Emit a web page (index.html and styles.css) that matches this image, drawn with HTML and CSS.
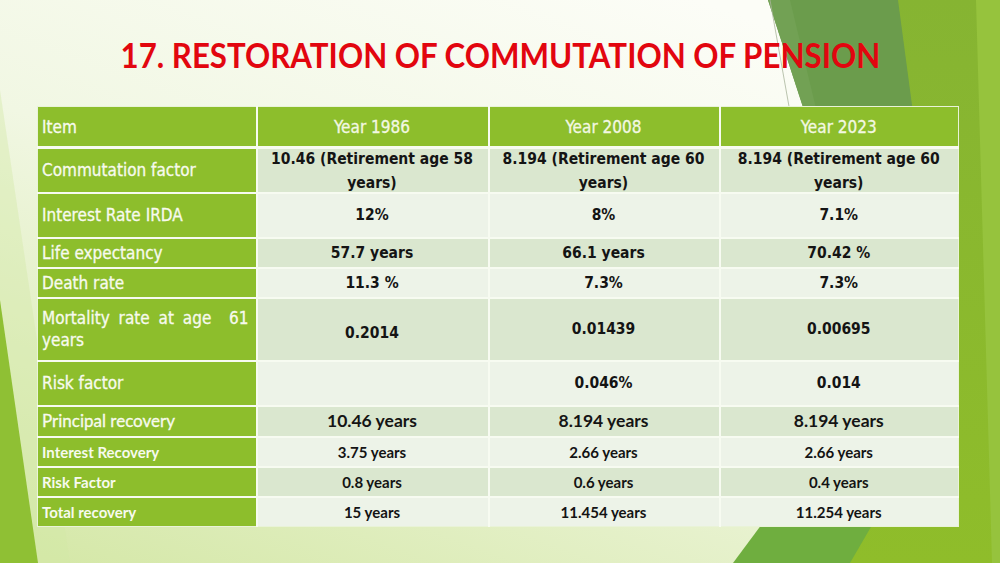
FILE: index.html
```html
<!DOCTYPE html>
<html lang="en">
<head>
<meta charset="utf-8">
<title>Restoration of Commutation of Pension</title>
<link rel="stylesheet" href="styles.css">
</head>
<body>
<div class="slide">
  <svg class="bg" viewBox="0 0 1000 563" preserveAspectRatio="none" aria-hidden="true">
    <defs>
      <linearGradient id="bgGrad" x1="0.7" y1="0" x2="0.05" y2="1">
        <stop offset="0" stop-color="#fcfdf7"/>
        <stop offset="0.45" stop-color="#f1f7e3"/>
        <stop offset="1" stop-color="#d5e8a8"/>
      </linearGradient>
      <linearGradient id="limeGrad" x1="0" y1="0" x2="0" y2="1">
        <stop offset="0" stop-color="#86b432"/>
        <stop offset="1" stop-color="#8fbd2a"/>
      </linearGradient>
    </defs>
    <rect width="1000" height="563" fill="url(#bgGrad)"/>
    <polygon points="0,90 0,563 70,563" fill="#d3e8a4" opacity="0.4"/>
    <polygon points="0,300 0,563 38,563" fill="#8fc034"/>
    <polygon points="880,0 1000,0 1000,563 850,563" fill="url(#limeGrad)"/>
    <polygon points="976,0 1000,0 1000,563 992,563" fill="#96c33d"/>
    <polygon points="768,0 898,0 918,150 817,150" fill="#6b9c4c"/>
    <polygon points="768,0 790,0 826,150 817,150" fill="#72a154"/>
    <line x1="770" y1="0" x2="790" y2="112" stroke="#a9b59c" stroke-width="0.8"/>
    <polygon points="765,520 875,520 850,563 733,563" fill="#6fae3f"/>
  </svg>

  <h1 class="title"><span class="title-text">17. RESTORATION OF COMMUTATION OF PENSION</span></h1>

  <table class="grid">
    <colgroup>
      <col class="c1"><col class="c2"><col class="c3"><col class="c4">
    </colgroup>
    <thead>
      <tr class="r-head">
        <th class="lab">Item</th>
        <th>Year 1986</th>
        <th>Year 2008</th>
        <th>Year 2023</th>
      </tr>
    </thead>
    <tbody>
      <tr class="r45 odd">
        <td class="lab">Commutation factor</td>
        <td><span class="wrap">10.46 (Retirement age 58 years)</span></td>
        <td><span class="wrap">8.194 (Retirement age 60 years)</span></td>
        <td><span class="wrap">8.194 (Retirement age 60 years)</span></td>
      </tr>
      <tr class="r45 even">
        <td class="lab">Interest Rate IRDA</td>
        <td>12%</td>
        <td>8%</td>
        <td>7.1%</td>
      </tr>
      <tr class="r30 odd">
        <td class="lab">Life expectancy</td>
        <td>57.7 years</td>
        <td>66.1 years</td>
        <td>70.42 %</td>
      </tr>
      <tr class="r30 even">
        <td class="lab">Death rate</td>
        <td>11.3 %</td>
        <td>7.3%</td>
        <td>7.3%</td>
      </tr>
      <tr class="r63 odd">
        <td class="lab just">Mortality rate at age&nbsp; 61 years</td>
        <td class="low">0.2014</td>
        <td>0.01439</td>
        <td>0.00695</td>
      </tr>
      <tr class="r45 even">
        <td class="lab">Risk factor</td>
        <td></td>
        <td>0.046%</td>
        <td>0.014</td>
      </tr>
      <tr class="r31 odd big">
        <td class="lab">Principal recovery</td>
        <td>10.46 years</td>
        <td>8.194 years</td>
        <td>8.194 years</td>
      </tr>
      <tr class="r30 even small">
        <td class="lab">Interest Recovery</td>
        <td>3.75 years</td>
        <td>2.66 years</td>
        <td>2.66 years</td>
      </tr>
      <tr class="r30 odd small">
        <td class="lab">Risk Factor</td>
        <td>0.8 years</td>
        <td>0.6 years</td>
        <td>0.4 years</td>
      </tr>
      <tr class="r30 even small">
        <td class="lab">Total recovery</td>
        <td>15 years</td>
        <td>11.454 years</td>
        <td>11.254 years</td>
      </tr>
    </tbody>
  </table>
</div>
</body>
</html>
```

FILE: styles.css
```css
body {
  margin: 0;
  background: #ffffff;
}

.slide {
  position: relative;
  width: 1000px;
  height: 563px;
  overflow: hidden;
  background: #f2f7e4;
}

.bg {
  position: absolute;
  left: 0;
  top: 0;
  width: 1000px;
  height: 563px;
}

.title {
  position: relative;
  margin: 0;
  padding-top: 34px;
  height: 40px;
  line-height: 40px;
  font-family: Lato, "Liberation Sans", sans-serif;
  font-weight: bold;
  font-size: 35px;
  color: #e2060f;
  text-align: center;
}

.title-text {
  display: inline-block;
  transform: scaleX(0.893);
  transform-origin: 50% 50%;
  white-space: nowrap;
}

.grid {
  position: relative;
  margin: 32px 0 0 37px;
  width: 921px;
  border-collapse: collapse;
  table-layout: fixed;
}

.c1 { width: 219px; }
.c2 { width: 232px; }
.c3 { width: 231px; }
.c4 { width: 239px; }

.grid th,
.grid td {
  border: 2px solid #f7fbf1;
  padding: 0 5px 0 4px;
  vertical-align: middle;
  text-align: center;
}

.grid tr > :first-child { border-left: 1px solid #e9f3d8; }
.grid tr > :last-child { border-right: 1px solid #e9f3d8; }
.grid thead th { border-top: 1px solid #e9f3d8; border-bottom-width: 3px; }
.grid tbody tr:last-child td { border-bottom: 1px solid #e9f3d8; }

.r-head { height: 41px; }
.r45 { height: 45px; }
.r30 { height: 30px; }
.r31 { height: 31px; }
.r63 { height: 63px; }

.grid th {
  background: #8dbe2c;
  color: #f3f8e2;
  font-family: "DejaVu Sans Condensed", "DejaVu Sans", sans-serif;
  font-stretch: condensed;
  font-weight: normal;
  font-size: 17px;
  line-height: 22px;
  -webkit-text-stroke: 0.3px currentColor;
}

.grid td {
  font-family: "DejaVu Sans Condensed", "DejaVu Sans", sans-serif;
  font-stretch: condensed;
  font-weight: bold;
  font-size: 15.5px;
  line-height: 22px;
  color: #141414;
}

.wrap {
  display: block;
  margin: -2px 0 -4px;
  line-height: 24px;
}

.grid tr.odd td { background: #dae7cf; }
.grid tr.even td { background: #edf3e8; }

.grid .lab,
.grid tr.odd td.lab,
.grid tr.even td.lab {
  background: #8dbe2c;
  color: #f7faee;
  text-align: left;
  font-weight: normal;
  font-size: 17px;
  line-height: 22px;
  -webkit-text-stroke: 0.3px currentColor;
}

.grid tr td.lab.just {
  text-align: justify;
  padding-right: 7px;
}

.grid td.low {
  padding-top: 7px;
}

.grid tr.big td {
  font-family: Lato, "Liberation Sans", sans-serif;
  font-stretch: normal;
  font-size: 17.5px;
  font-weight: bold;
}

.grid tr.big td.lab {
  font-weight: normal;
}

.grid tr.small td,
.grid tr.small td.lab {
  font-family: Lato, "Liberation Sans", sans-serif;
  font-stretch: normal;
  font-size: 15px;
  font-weight: bold;
  -webkit-text-stroke: 0;
}
```
